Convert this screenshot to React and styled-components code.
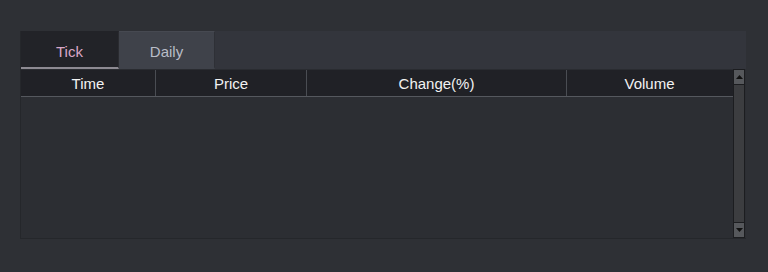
import styled, { createGlobalStyle } from 'styled-components';

const GlobalStyle = createGlobalStyle`
  html, body {
    margin: 0;
    padding: 0;
    background: #2e3035;
    font-family: "Liberation Sans", Arial, sans-serif;
  }
`;

const Page = styled.div`
  width: 768px;
  height: 272px;
  padding: 31px 22px 33px 20px;
  box-sizing: border-box;
`;

const Panel = styled.div`
  height: 100%;
  display: flex;
  flex-direction: column;
  background: #33353c;
  border-left: 1px solid #25272b;
`;

const TabBar = styled.div`
  display: flex;
  height: 38px;
  box-sizing: border-box;
`;

const Tab = styled.div`
  width: ${p => p.w}px;
  display: flex;
  align-items: center;
  justify-content: center;
  padding-top: 3px;
  font-size: 15px;
  background: ${p => (p.active ? '#222328' : '#3f424a')};
  color: ${p => (p.active ? '#d9a7c7' : '#b9bdc8')};
  border-top: 1px solid ${p => (p.active ? 'transparent' : '#464951')};
  border-bottom: 2px solid ${p => (p.active ? '#8d8a92' : 'transparent')};
  border-right: 1px solid ${p => (p.active ? '#2a2b30' : '#2e3036')};
  box-sizing: border-box;
`;

const TableWrap = styled.div`
  flex: 1;
  display: flex;
  background: #2c2e33;
  border-bottom: 1px solid #25272b;
`;

const Table = styled.div`
  flex: 1;
  display: flex;
  flex-direction: column;
`;

const HeaderRow = styled.div`
  display: flex;
  height: 28px;
  background: #202126;
  border-top: 1px solid #2a2c31;
  border-bottom: 1px solid #55585e;
  box-sizing: border-box;
`;

const HeaderCell = styled.div`
  width: ${p => p.w}px;
  display: flex;
  align-items: center;
  justify-content: center;
  color: #f2f2f2;
  font-size: 15px;
  border-right: 1px solid ${p => (p.last ? 'transparent' : '#4a4d53')};
  box-sizing: border-box;
`;

const Scrollbar = styled.div`
  width: 13px;
  display: flex;
  flex-direction: column;
  background: #3c3d40;
  border: 1px solid #1c1d20;
  box-sizing: border-box;
  margin-right: 1px;
`;

const ScrollButton = styled.div`
  height: 14px;
  display: flex;
  align-items: center;
  justify-content: center;
  background: #56585c;
  border-bottom: ${p => (p.up ? '1px solid #1c1d20' : 'none')};
  border-top: ${p => (p.up ? 'none' : '1px solid #1c1d20')};
`;

const Track = styled.div`
  flex: 1;
`;

const columns = [
  { label: 'Time', w: 135 },
  { label: 'Price', w: 151 },
  { label: 'Change(%)', w: 260 },
  { label: 'Volume', w: 166 },
];

export default function App() {
  return (
    <>
      <GlobalStyle />
      <Page>
        <Panel>
          <TabBar>
            <Tab active w={98}>Tick</Tab>
            <Tab w={96}>Daily</Tab>
          </TabBar>
          <TableWrap>
            <Table>
              <HeaderRow>
                {columns.map((c, i) => (
                  <HeaderCell key={c.label} w={c.w} last={i === columns.length - 1}>
                    {c.label}
                  </HeaderCell>
                ))}
              </HeaderRow>
            </Table>
            <Scrollbar>
              <ScrollButton up>
                <svg width="7" height="4" viewBox="0 0 7 4">
                  <path d="M0 4 L3.5 0 L7 4 Z" fill="#111" />
                </svg>
              </ScrollButton>
              <Track />
              <ScrollButton>
                <svg width="7" height="4" viewBox="0 0 7 4">
                  <path d="M0 0 L3.5 4 L7 0 Z" fill="#111" />
                </svg>
              </ScrollButton>
            </Scrollbar>
          </TableWrap>
        </Panel>
      </Page>
    </>
  );
}
